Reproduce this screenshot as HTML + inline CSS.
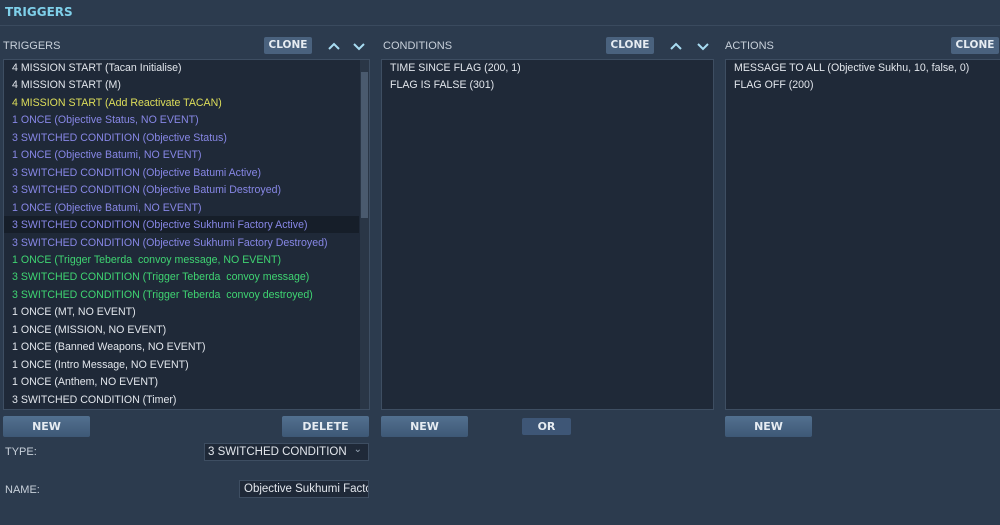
<!DOCTYPE html><html><head><style>
body{margin:0;width:1000px;height:525px;overflow:hidden;background:#2c3b4e;font-family:"Liberation Sans","DejaVu Sans",sans-serif;position:relative}
.a{position:absolute}
.t{font-size:12px;color:#7fd0ea;font-weight:bold;left:5px;top:5px;font-family:"DejaVu Sans",sans-serif}
.hl{left:0;top:25px;width:1000px;height:1px;background:#3a4a5e}
.lbl{font-size:11px;color:#c8d0da;top:40px}
.btn{background:linear-gradient(#52708f,#3e5876);color:#e6ecf2;font-size:11px;font-weight:bold;text-align:center;border-radius:2px;font-family:"DejaVu Sans",sans-serif}
.clone{top:37px;height:17px;line-height:17px;width:48px;background:#4a627e;font-size:10.5px}
.list{background:#1f2938;border:1px solid #3e4e62;top:59px;height:349px}
.r{position:absolute;left:8px;font-size:10.6px;height:17.45px;line-height:17.45px;white-space:nowrap}
.w{color:#e2e6ec}.y{color:#dede5a}.b{color:#8787e6}.g{color:#3fd472}
</style></head><body>
<div class="a t">TRIGGERS</div><div class="a hl"></div>
<div class="a lbl" style="left:3px">TRIGGERS</div>
<div class="a lbl" style="left:383px">CONDITIONS</div>
<div class="a lbl" style="left:725px">ACTIONS</div>
<div class="a btn clone" style="left:264px">CLONE</div>
<div class="a btn clone" style="left:606px">CLONE</div>
<div class="a btn clone" style="left:951px">CLONE</div>
<svg class="a" style="left:327px;top:40px" width="44" height="12"><path d="M2 9L7 4L12 9M27 4L32 9L37 4" stroke="#a8dcf2" stroke-width="2" fill="none"/></svg>
<svg class="a" style="left:669px;top:40px" width="44" height="12"><path d="M2 9L7 4L12 9M29 4L34 9L39 4" stroke="#a8dcf2" stroke-width="2" fill="none"/></svg>
<div class="a list" style="left:3px;width:365px">
<div class="a" style="left:0;top:156px;width:355px;height:17.45px;background:#161e29"></div>
<div class="a" style="left:356px;top:0;width:9px;height:349px;background:#2a3646"></div>
<div class="a" style="left:357px;top:12px;width:7px;height:146px;background:#4a5a6e"></div>
<div class="r w" style="top:0">4 MISSION START (Tacan Initialise)</div>
<div class="r w" style="top:17.45px">4 MISSION START (M)</div>
<div class="r y" style="top:34.9px">4 MISSION START (Add Reactivate TACAN)</div>
<div class="r b" style="top:52.35px">1 ONCE (Objective Status, NO EVENT)</div>
<div class="r b" style="top:69.8px">3 SWITCHED CONDITION (Objective Status)</div>
<div class="r b" style="top:87.25px">1 ONCE (Objective Batumi, NO EVENT)</div>
<div class="r b" style="top:104.7px">3 SWITCHED CONDITION (Objective Batumi Active)</div>
<div class="r b" style="top:122.15px">3 SWITCHED CONDITION (Objective Batumi Destroyed)</div>
<div class="r b" style="top:139.6px">1 ONCE (Objective Batumi, NO EVENT)</div>
<div class="r b" style="top:157.05px">3 SWITCHED CONDITION (Objective Sukhumi Factory Active)</div>
<div class="r b" style="top:174.5px">3 SWITCHED CONDITION (Objective Sukhumi Factory Destroyed)</div>
<div class="r g" style="top:191.95px">1 ONCE (Trigger Teberda&nbsp; convoy message, NO EVENT)</div>
<div class="r g" style="top:209.4px">3 SWITCHED CONDITION (Trigger Teberda&nbsp; convoy message)</div>
<div class="r g" style="top:226.85px">3 SWITCHED CONDITION (Trigger Teberda&nbsp; convoy destroyed)</div>
<div class="r w" style="top:244.3px">1 ONCE (MT, NO EVENT)</div>
<div class="r w" style="top:261.75px">1 ONCE (MISSION, NO EVENT)</div>
<div class="r w" style="top:279.2px">1 ONCE (Banned Weapons, NO EVENT)</div>
<div class="r w" style="top:296.65px">1 ONCE (Intro Message, NO EVENT)</div>
<div class="r w" style="top:314.1px">1 ONCE (Anthem, NO EVENT)</div>
<div class="r w" style="top:331.55px">3 SWITCHED CONDITION (Timer)</div>
</div>
<div class="a list" style="left:381px;width:331px">
<div class="r w" style="top:0">TIME SINCE FLAG (200, 1)</div>
<div class="r w" style="top:17.45px">FLAG IS FALSE (301)</div>
</div>
<div class="a list" style="left:725px;width:290px">
<div class="r w" style="top:0">MESSAGE TO ALL (Objective Sukhu, 10, false, 0)</div>
<div class="r w" style="top:17.45px">FLAG OFF (200)</div>
</div>
<div class="a btn" style="left:3px;top:416px;width:87px;height:21px;line-height:21px">NEW</div>
<div class="a btn" style="left:282px;top:416px;width:87px;height:21px;line-height:21px">DELETE</div>
<div class="a btn" style="left:381px;top:416px;width:87px;height:21px;line-height:21px">NEW</div>
<div class="a btn" style="left:522px;top:418px;width:49px;height:17px;line-height:17px;background:#3e5676">OR</div>
<div class="a btn" style="left:725px;top:416px;width:87px;height:21px;line-height:21px">NEW</div>
<div class="a lbl" style="left:5px;top:446px">TYPE:</div>
<div class="a" style="left:204px;top:443px;width:165px;height:18px;box-sizing:border-box;background:#1f2938;border:1px solid #3e4e62;color:#e2e6ec;font-size:11.5px;line-height:16px;padding-left:3px">3 SWITCHED CONDITION<span style="position:absolute;right:6px;top:-2px;color:#9aa8b8;font-size:10px">&#8964;</span></div>
<div class="a lbl" style="left:5px;top:484px">NAME:</div>
<div class="a" style="left:239px;top:480px;height:18px;background:#1f2938;border:1px solid #3e4e62;color:#e2e6ec;font-size:11.5px;line-height:16px;padding-left:4px;overflow:hidden;white-space:nowrap;box-sizing:border-box;width:130px">Objective Sukhumi Factory</div>
</body></html>
